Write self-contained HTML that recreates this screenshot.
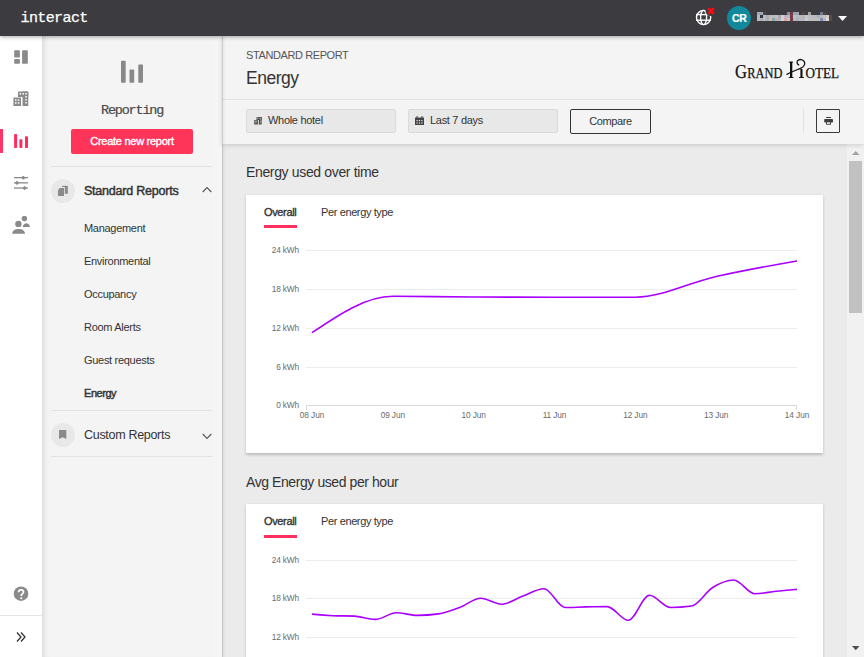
<!DOCTYPE html>
<html><head><meta charset="utf-8">
<style>
*{box-sizing:border-box;margin:0;padding:0}
html,body{width:864px;height:657px;overflow:hidden;background:#ebebeb;font-family:"Liberation Sans",sans-serif;color:#333}
.abs{position:absolute}
#top{position:absolute;left:0;top:0;width:864px;height:36px;background:#3c3b40;z-index:5;box-shadow:0 1px 4px rgba(0,0,0,.35)}
#brand{position:absolute;left:20.5px;top:10px;font-family:"Liberation Mono",monospace;font-size:15px;color:#fff;letter-spacing:-0.6px;-webkit-text-stroke:0.25px #fff}
#rail{position:absolute;left:0;top:36px;width:42px;height:621px;background:#fff;z-index:3}
#side{position:absolute;left:42px;top:36px;width:180px;height:621px;background:linear-gradient(90deg,#f4f4f4 170px,#f7f7f7 180px);box-shadow:inset 6px 0 6px -5px rgba(0,0,0,.15)}
#sedge{position:absolute;left:222px;top:36px;width:4px;height:621px;background:linear-gradient(90deg,rgba(0,0,0,.16) 0,rgba(0,0,0,.16) 1px,rgba(0,0,0,.05) 1px,rgba(0,0,0,0) 4px);z-index:4}
#hdr{position:absolute;left:222px;top:36px;width:642px;height:108px;background:#f4f4f4;box-shadow:0 1px 5px rgba(0,0,0,.16);z-index:2}
.t{position:absolute;white-space:nowrap}
.card{position:absolute;left:246px;width:577px;background:#fff;border-radius:1px;box-shadow:0 1.5px 3px rgba(0,0,0,.2)}
.navi{position:absolute;left:84px;margin-top:1px;font-size:11px;letter-spacing:-0.3px;color:#333;white-space:nowrap}
.ylab{position:absolute;font-size:8px;color:#555;text-align:right;width:40px;white-space:nowrap}
.xlab{position:absolute;font-size:8px;color:#555;text-align:center;width:40px;white-space:nowrap}
</style></head><body>
<div id="top">
  <div id="brand">interact</div>
  <!-- globe -->
  <svg class="abs" style="left:690px;top:4px" width="30" height="26" viewBox="0 0 30 26">
    <defs><mask id="gm"><rect width="30" height="26" fill="#fff"/><circle cx="21" cy="6.5" r="5.5" fill="#000"/></mask></defs>
    <g fill="none" stroke="#fff" stroke-width="1.4" mask="url(#gm)">
      <circle cx="13.6" cy="13.5" r="7.1"/>
      <ellipse cx="13.6" cy="13.5" rx="3" ry="7.1"/>
      <line x1="6" y1="10.6" x2="21" y2="10.6"/>
      <line x1="6" y1="16.2" x2="21" y2="16.2"/>
    </g>
    <path d="M18.3 4.2 L23.9 9.8 M23.9 4.2 L18.3 9.8" stroke="#ff0a14" stroke-width="2.5"/>
  </svg>
  <div class="abs" style="left:727px;top:6px;width:24px;height:24px;border-radius:50%;background:#11899b"></div>
  <div class="t" style="left:732px;top:12px;font-size:10.5px;font-weight:bold;color:#fff;letter-spacing:-0.3px;-webkit-text-stroke:0.2px #fff">CR</div>
  <div class="abs" style="left:0;top:0;filter:blur(0.5px)"><div class="abs" style="left:757px;top:15px;width:3px;height:3px;background:#b5bac0"></div><div class="abs" style="left:757px;top:18px;width:3px;height:3px;background:#b8bcc0"></div><div class="abs" style="left:757px;top:12px;width:3px;height:3px;background:#a3a9b3"></div><div class="abs" style="left:760px;top:15px;width:3px;height:3px;background:#2f3540"></div><div class="abs" style="left:760px;top:18px;width:3px;height:3px;background:#a8b0b8"></div><div class="abs" style="left:760px;top:12px;width:3px;height:3px;background:#a3a9b3"></div><div class="abs" style="left:763px;top:15px;width:3px;height:3px;background:#b8bcc8"></div><div class="abs" style="left:763px;top:18px;width:3px;height:3px;background:#c8b8b8"></div><div class="abs" style="left:763px;top:12px;width:3px;height:3px;background:#4e4544"></div><div class="abs" style="left:766px;top:15px;width:3px;height:3px;background:#a9aeb5"></div><div class="abs" style="left:766px;top:18px;width:3px;height:3px;background:#a8b0b0"></div><div class="abs" style="left:769px;top:15px;width:3px;height:3px;background:#c9b8c0"></div><div class="abs" style="left:769px;top:18px;width:3px;height:3px;background:#d0c0a0"></div><div class="abs" style="left:772px;top:15px;width:3px;height:3px;background:#b5c0b8"></div><div class="abs" style="left:772px;top:18px;width:3px;height:3px;background:#80a8b8"></div><div class="abs" style="left:775px;top:15px;width:3px;height:3px;background:#c8b8d0"></div><div class="abs" style="left:775px;top:18px;width:3px;height:3px;background:#d0a8b0"></div><div class="abs" style="left:778px;top:15px;width:3px;height:3px;background:#a8a8b0"></div><div class="abs" style="left:778px;top:18px;width:3px;height:3px;background:#a8b8c0"></div><div class="abs" style="left:781px;top:15px;width:3px;height:3px;background:#d0d0d0"></div><div class="abs" style="left:781px;top:18px;width:3px;height:3px;background:#d8d0d0"></div><div class="abs" style="left:784px;top:15px;width:3px;height:3px;background:#c8b0c0"></div><div class="abs" style="left:784px;top:18px;width:3px;height:3px;background:#d8a8b0"></div><div class="abs" style="left:787px;top:15px;width:3px;height:3px;background:#b0bcc8"></div><div class="abs" style="left:787px;top:18px;width:3px;height:3px;background:#c0c8d0"></div><div class="abs" style="left:787px;top:12px;width:3px;height:3px;background:#8490a8"></div><div class="abs" style="left:790px;top:15px;width:3px;height:3px;background:#7a3a40"></div><div class="abs" style="left:790px;top:18px;width:3px;height:3px;background:#7a3a40"></div><div class="abs" style="left:790px;top:12px;width:3px;height:3px;background:#7a3a40"></div><div class="abs" style="left:793px;top:15px;width:3px;height:3px;background:#b8c0d0"></div><div class="abs" style="left:793px;top:18px;width:3px;height:3px;background:#c0b0b8"></div><div class="abs" style="left:793px;top:12px;width:3px;height:3px;background:#9aa3b0"></div><div class="abs" style="left:796px;top:15px;width:3px;height:3px;background:#b3b8c2"></div><div class="abs" style="left:796px;top:18px;width:3px;height:3px;background:#a8b4c0"></div><div class="abs" style="left:796px;top:12px;width:3px;height:3px;background:#9aa3b0"></div><div class="abs" style="left:799px;top:15px;width:3px;height:3px;background:#c4b5bb"></div><div class="abs" style="left:799px;top:18px;width:3px;height:3px;background:#c8b0b8"></div><div class="abs" style="left:802px;top:15px;width:3px;height:3px;background:#b0b5bb"></div><div class="abs" style="left:802px;top:18px;width:3px;height:3px;background:#b0bcc0"></div><div class="abs" style="left:802px;top:12px;width:3px;height:3px;background:#4e4544"></div><div class="abs" style="left:805px;top:15px;width:3px;height:3px;background:#c8c3c0"></div><div class="abs" style="left:805px;top:18px;width:3px;height:3px;background:#d0c8c8"></div><div class="abs" style="left:808px;top:15px;width:3px;height:3px;background:#bcc0c6"></div><div class="abs" style="left:808px;top:18px;width:3px;height:3px;background:#b8c0c8"></div><div class="abs" style="left:808px;top:12px;width:3px;height:3px;background:#a5a3a0"></div><div class="abs" style="left:811px;top:15px;width:3px;height:3px;background:#c0b8c8"></div><div class="abs" style="left:811px;top:18px;width:3px;height:3px;background:#c8b8c0"></div><div class="abs" style="left:814px;top:15px;width:3px;height:3px;background:#b0b8c0"></div><div class="abs" style="left:814px;top:18px;width:3px;height:3px;background:#c0c0b0"></div><div class="abs" style="left:817px;top:15px;width:3px;height:3px;background:#a8b0c0"></div><div class="abs" style="left:817px;top:18px;width:3px;height:3px;background:#b8c0c0"></div><div class="abs" style="left:820px;top:15px;width:3px;height:3px;background:#c0b8c0"></div><div class="abs" style="left:820px;top:18px;width:3px;height:3px;background:#8090b0"></div><div class="abs" style="left:820px;top:12px;width:3px;height:3px;background:#6d7690"></div><div class="abs" style="left:823px;top:15px;width:3px;height:3px;background:#c8c0b8"></div><div class="abs" style="left:823px;top:18px;width:3px;height:3px;background:#c0b8c0"></div><div class="abs" style="left:823px;top:12px;width:3px;height:3px;background:#5a4040"></div><div class="abs" style="left:826px;top:15px;width:3px;height:3px;background:#d0d0d0"></div><div class="abs" style="left:826px;top:18px;width:3px;height:3px;background:#d8d8d8"></div><div class="abs" style="left:829px;top:15px;width:3px;height:3px;background:#5b4a44"></div><div class="abs" style="left:829px;top:18px;width:3px;height:3px;background:#5b4a44"></div></div>
  <svg class="abs" style="left:838px;top:16px" width="9" height="6"><path d="M0 0 L9 0 L4.5 5 Z" fill="#fff"/></svg>
</div>

<div id="rail">
  <!-- dashboard -->
  <svg class="abs" style="left:14px;top:14px" width="14" height="14" viewBox="0 0 14 14"><g fill="#8a8a8a"><rect x="0.2" y="0.2" width="5.7" height="7.4" rx="0.8"/><rect x="0.2" y="9.1" width="5.7" height="4.7" rx="0.8"/><rect x="8.1" y="0.2" width="5.7" height="13.6" rx="0.8"/></g></svg>
  <!-- building -->
  <svg class="abs" style="left:13px;top:55px" width="16" height="16" viewBox="0 0 16 16"><g fill="#8a8a8a"><rect x="5" y="0.4" width="10.3" height="5.6" rx="0.6"/><rect x="9.3" y="0.4" width="6" height="14.6" rx="0.6"/><rect x="0.4" y="6.4" width="7.6" height="8.6" rx="0.6"/></g><g fill="#fff"><rect x="6.5" y="2" width="1.5" height="1.5"/><rect x="9.5" y="2" width="1.5" height="1.5"/><rect x="12.3" y="2" width="1.5" height="1.5"/><rect x="12.3" y="5" width="1.5" height="1.5"/><rect x="12.3" y="8" width="1.5" height="1.5"/><rect x="12.3" y="11" width="1.5" height="1.5"/><rect x="2" y="8.3" width="1.5" height="1.5"/><rect x="4.8" y="8.3" width="1.5" height="1.5"/><rect x="2" y="11.2" width="1.5" height="1.5"/><rect x="4.8" y="11.2" width="1.5" height="1.5"/></g><rect x="8" y="6" width="1.3" height="9" fill="#fff"/></svg>
  <!-- active bar -->
  <div class="abs" style="left:0;top:93px;width:3px;height:24px;background:#ff3366"></div>
  <svg class="abs" style="left:14px;top:98px" width="14" height="14" viewBox="0 0 14 14"><g fill="#ff2d5f"><rect x="0.1" y="0" width="3" height="14" rx="0.8"/><rect x="5.4" y="5.3" width="3" height="8.7" rx="0.8"/><rect x="11" y="2.3" width="3" height="11.7" rx="0.8"/></g></svg>
  <!-- sliders -->
  <svg class="abs" style="left:14px;top:140px" width="14" height="14" viewBox="0 0 14 14"><g fill="#8a8a8a"><rect x="0" y="1" width="14" height="1.3"/><rect x="0" y="6.2" width="14" height="1.3"/><rect x="0" y="11.4" width="14" height="1.3"/><path d="M9.3,-0.5 L11.5,1.65 L9.3,3.8 L7.1,1.65Z"/><path d="M3,4.7 L5.2,6.85 L3,9 L0.8,6.85Z"/><path d="M10.6,9.9 L12.8,12.05 L10.6,14.2 L8.4,12.05Z"/></g></svg>
  <!-- people -->
  <svg class="abs" style="left:12px;top:180px" width="18" height="18" viewBox="0 0 18 18"><g fill="#8a8a8a"><circle cx="12.4" cy="2.5" r="2.7"/><path d="M10.6,11.1 C11.2,8.5 12.8,7.3 14.4,7.3 C16,7.3 17.5,8.5 18,11.1 Z"/></g><circle cx="6.4" cy="7.9" r="4.4" fill="#fff"/><path d="M-1,18.8 C-1,13.5 3,11.7 6.6,11.7 C10.2,11.7 14.2,13.5 14.2,18.8Z" fill="#fff"/><g fill="#8a8a8a"><circle cx="6.4" cy="7.9" r="3.2"/><path d="M0.2,17.7 C0.4,14.2 3.5,12.9 6.6,12.9 C9.7,12.9 12.8,14.2 13,17.7 Z"/></g></svg>
  <!-- help -->
  <svg class="abs" style="left:13px;top:549px" width="16" height="16" viewBox="0 0 16 16"><circle cx="8" cy="8.7" r="7.3" fill="#8a8a8a"/><g transform="translate(0,0.8)"><path d="M5.6,6.4 C5.6,4.9 6.7,4 8.1,4 C9.5,4 10.5,4.9 10.5,6.1 C10.5,7.6 8.6,7.9 8.3,9.6 L8.3,10.3" fill="none" stroke="#fff" stroke-width="1.7"/><rect x="7.3" y="11.6" width="1.9" height="1.7" fill="#fff"/></g></svg>
  <div class="abs" style="left:0;top:579px;width:42px;height:1px;background:#e3e3e3"></div>
  <svg class="abs" style="left:16px;top:596px" width="10" height="10" viewBox="0 0 10 10"><path d="M1 0.5 L5 5 L1 9.5 M5 0.5 L9 5 L5 9.5" fill="none" stroke="#333" stroke-width="1.3"/></svg>
</div>

<div id="side">
  <svg class="abs" style="left:79px;top:24px" width="24" height="24" viewBox="0 0 24 24"><g fill="#888"><rect x="0" y="0.8" width="4.7" height="22" rx=".7"/><rect x="8.5" y="9.6" width="4.7" height="13.2" rx=".7"/><rect x="17.3" y="4.4" width="4.7" height="18.4" rx=".7"/></g></svg>
  <div class="t" style="left:59px;top:67px;font-family:'Liberation Mono',monospace;font-size:13.5px;letter-spacing:-1.2px;color:#4a4a4a;-webkit-text-stroke:0.2px #4a4a4a">Reporting</div>
  <div class="abs" style="left:29px;top:93px;width:122px;height:25px;background:#fe3459;border-radius:2px;color:#fff;font-size:11px;letter-spacing:-0.27px;-webkit-text-stroke:0.35px #fff;text-align:center;line-height:25px">Create new report</div>
  <div class="abs" style="left:9px;top:130px;width:161px;height:1px;background:#e2e2e2"></div>
  <div class="abs" style="left:9px;top:143px;width:24px;height:24px;border-radius:50%;background:#e8e8e8"></div>
  <svg class="abs" style="left:16px;top:149px" width="11" height="12" viewBox="0 0 11 12"><rect x="4.1" y="0.8" width="5.7" height="8" fill="#8a8a8a"/><path d="M0,5.2 L2.2,2.9 L6,2.9 L6,10.9 L0,10.9Z" fill="#e9e9e9" stroke="#e9e9e9" stroke-width="1.6"/><path d="M0,5.2 L2.2,2.9 L6,2.9 L6,10.9 L0,10.9Z" fill="#8a8a8a"/><path d="M0.2,4.6 L1.7,3.1 L1.7,4.6Z" fill="#8a8a8a"/></svg>
  <div class="t" style="left:42px;top:148px;font-size:12.5px;letter-spacing:-0.22px;-webkit-text-stroke:0.45px #333;color:#333">Standard Reports</div>
  <svg class="abs" style="left:160px;top:150px" width="10" height="7" viewBox="0 0 10 7"><path d="M0.7 6 L5 1.5 L9.3 6" fill="none" stroke="#555" stroke-width="1.1"/></svg>
</div>
<div class="navi" style="top:221px">Management</div>
<div class="navi" style="top:254px">Environmental</div>
<div class="navi" style="top:287px">Occupancy</div>
<div class="navi" style="top:320px">Room Alerts</div>
<div class="navi" style="top:353px">Guest requests</div>
<div class="navi" style="top:386px;letter-spacing:-0.45px;-webkit-text-stroke:0.45px #333">Energy</div>
<div class="abs" style="left:51px;top:410px;width:161px;height:1px;background:#e2e2e2"></div>
<div class="abs" style="left:51px;top:423px;width:24px;height:24px;border-radius:50%;background:#e8e8e8"></div>
<svg class="abs" style="left:59.3px;top:430.1px" width="8" height="9" viewBox="0 0 8 9"><path d="M0 0 H7.3 V8.9 L3.65 7.3 L0 8.9Z" fill="#8a8a8a"/></svg>
<div class="t" style="left:84px;top:428px;font-size:12.5px;letter-spacing:-0.3px;color:#333">Custom Reports</div>
<svg class="abs" style="left:202px;top:433px" width="10" height="7" viewBox="0 0 10 7"><path d="M0.7 1 L5 5.5 L9.3 1" fill="none" stroke="#555" stroke-width="1.1"/></svg>
<div class="abs" style="left:51px;top:456px;width:161px;height:1px;background:#e2e2e2"></div>

<div id="sedge"></div>
<div id="hdr">
  <div class="t" style="left:24px;top:13.3px;font-size:11px;letter-spacing:-0.4px;color:#555">STANDARD REPORT</div>
  <div class="t" style="left:24px;top:32px;font-size:17.5px;letter-spacing:-0.5px;color:#333">Energy</div>
  <svg class="abs" style="left:508px;top:19px" width="115" height="30" viewBox="0 0 115 30">
    <g font-family="Liberation Serif" fill="#111" stroke="#111" stroke-width="0.25">
      <text x="5" y="22.9" font-size="19" textLength="12" lengthAdjust="spacingAndGlyphs">G</text>
      <text x="17.3" y="22.9" font-size="13.8" textLength="35" lengthAdjust="spacingAndGlyphs">RAND</text>
      <text x="75.5" y="22.9" font-size="13.8" textLength="33.5" lengthAdjust="spacingAndGlyphs">OTEL</text>
    </g>
    <g fill="#111">
      <rect x="60" y="6.7" width="2.3" height="16.2"/>
      <rect x="58.7" y="6.7" width="4.4" height="0.9"/>
      <rect x="58.7" y="22" width="4.8" height="0.9"/>
      <rect x="70.4" y="14" width="2.1" height="8.9"/>
      <rect x="69" y="22" width="5" height="0.9"/>
    </g>
    <path d="M56.5,19.6 C61,17 67,14.8 70.5,13.3 C73.5,12 75.2,9.5 74.5,7 C73.5,4 69,3.8 67.5,5.8 C66.5,7.2 67.3,9.6 69.2,10.2" fill="none" stroke="#111" stroke-width="1.3"/>
  </svg>
  <div class="abs" style="left:0;top:63px;width:642px;height:1px;background:#e4e4e4"></div>
  <div class="abs" style="left:24px;top:73px;width:150px;height:24px;background:#e8e8e8;border:1px solid #dadada;border-radius:2px"></div>
  <svg class="abs" style="left:31.5px;top:80.7px" width="8" height="8" viewBox="0 0 16 16"><g fill="#4a4a4a"><rect x="5" y="0.4" width="10.3" height="5.6"/><rect x="9.3" y="0.4" width="6" height="14.6"/><rect x="0.4" y="6.4" width="7.6" height="8.6"/></g><g fill="#e8e8e8"><rect x="6.5" y="2" width="1.5" height="1.5"/><rect x="9.5" y="2" width="1.5" height="1.5"/><rect x="12.3" y="2" width="1.5" height="1.5"/><rect x="12.3" y="5" width="1.5" height="1.5"/><rect x="12.3" y="8" width="1.5" height="1.5"/><rect x="12.3" y="11" width="1.5" height="1.5"/><rect x="2" y="8.3" width="1.5" height="1.5"/><rect x="4.8" y="8.3" width="1.5" height="1.5"/><rect x="2" y="11.2" width="1.5" height="1.5"/><rect x="4.8" y="11.2" width="1.5" height="1.5"/></g><rect x="8" y="6" width="1.3" height="9" fill="#e8e8e8"/></svg>
  <div class="t" style="left:46px;top:78px;font-size:11px;letter-spacing:-0.3px;color:#333">Whole hotel</div>
  <div class="abs" style="left:186px;top:73px;width:150px;height:24px;background:#e8e8e8;border:1px solid #dadada;border-radius:2px"></div>
  <svg class="abs" style="left:193px;top:80px" width="9" height="9" viewBox="0 0 9 9"><path d="M0 1.5 H9 V9 H0Z" fill="#444"/><path d="M2 0 V2 M7 0 V2" stroke="#444"/><g fill="#e8e8e8"><rect x="1.5" y="4" width="1.2" height="1.2"/><rect x="3.9" y="4" width="1.2" height="1.2"/><rect x="6.3" y="4" width="1.2" height="1.2"/><rect x="1.5" y="6.4" width="1.2" height="1.2"/><rect x="3.9" y="6.4" width="1.2" height="1.2"/><rect x="6.3" y="6.4" width="1.2" height="1.2"/></g></svg>
  <div class="t" style="left:208px;top:78px;font-size:11px;letter-spacing:-0.3px;color:#333">Last 7 days</div>
  <div class="abs" style="left:348px;top:73px;width:81px;height:25px;border:1.3px solid #333;border-radius:2px;font-size:11px;letter-spacing:-0.4px;color:#333;text-align:center;line-height:23px">Compare</div>
  <div class="abs" style="left:581px;top:72px;width:1px;height:25px;background:#e2e2e2"></div>
  <div class="abs" style="left:594px;top:73px;width:24px;height:24px;border:1.3px solid #3a3a3d;border-radius:1px"></div>
  <svg class="abs" style="left:601px;top:80px" width="12" height="10" viewBox="0 0 12 10"><g fill="#3d3d40"><rect x="3.1" y="1" width="4.9" height="1"/><rect x="1.2" y="2.9" width="8.8" height="3.7" rx="0.8"/><rect x="3.1" y="5.5" width="4.9" height="3.2"/></g><rect x="4" y="6.3" width="3.1" height="1.5" fill="#f4f4f4"/></svg>
</div>

<div class="t" style="left:246px;top:164.4px;font-size:14px;letter-spacing:-0.35px;color:#333">Energy used over time</div>
<div class="card" style="top:195px;height:258px"></div>
<div class="t" style="left:246px;top:473.6px;font-size:14px;letter-spacing:-0.42px;color:#333">Avg Energy used per hour</div>
<div class="card" style="top:504px;height:200px"></div>

<!-- scrollbar -->
<div class="abs" style="left:847px;top:144px;width:17px;height:513px;background:#f1f1f1"></div>
<div class="abs" style="left:849px;top:161px;width:13px;height:152px;background:#c1c1c1"></div>
<svg class="abs" style="left:852px;top:150.8px" width="8" height="5"><path d="M0 4.1 L3.75 0 L7.5 4.1Z" fill="#a3a3a3"/></svg>
<svg class="abs" style="left:852px;top:646px" width="8" height="5"><path d="M0 0 L3.75 4.2 L7.5 0Z" fill="#505050"/></svg>

<svg class="abs" style="left:0;top:0" width="864" height="657" viewBox="0 0 864 657">
  <g id="chart1">
    <text x="264" y="215.5" font-size="11" letter-spacing="-0.35" stroke="#333" stroke-width="0.35" fill="#333" font-family="Liberation Sans">Overall</text>
    <rect x="264" y="225" width="33" height="3" fill="#ff2f5e"/>
    <text x="321" y="215.5" font-size="11" letter-spacing="-0.38" fill="#333" font-family="Liberation Sans">Per energy type</text>
    <g stroke="#ececec" stroke-width="1">
      <line x1="306" y1="250.5" x2="797" y2="250.5"/>
      <line x1="306" y1="289.5" x2="797" y2="289.5"/>
      <line x1="306" y1="328.5" x2="797" y2="328.5"/>
      <line x1="306" y1="367.5" x2="797" y2="367.5"/>
    </g>
    <path d="M306.5,410 V405.5 H796.5 V410" fill="none" stroke="#d9d9d9"/>
    <g font-size="8.3" fill="#6a6a6a" letter-spacing="-0.15" font-family="Liberation Sans" text-anchor="end">
      <text x="299" y="252.5">24 kWh</text>
      <text x="299" y="291.5">18 kWh</text>
      <text x="299" y="330.5">12 kWh</text>
      <text x="299" y="369.5">6 kWh</text>
      <text x="299" y="408">0 kWh</text>
    </g>
    <g font-size="8.3" fill="#6a6a6a" letter-spacing="-0.1" font-family="Liberation Sans" text-anchor="middle">
      <text x="312" y="418">08 Jun</text>
      <text x="392.8" y="418">09 Jun</text>
      <text x="473.7" y="418">10 Jun</text>
      <text x="554.5" y="418">11 Jun</text>
      <text x="635.3" y="418">12 Jun</text>
      <text x="716.2" y="418">13 Jun</text>
      <text x="797" y="418">14 Jun</text>
    </g>
    <path d="M312.0,332.7 C338.9,314.5 365.9,296.3 392.8,296.3 C419.8,296.3 446.7,296.9 473.7,297.0 C500.6,297.1 527.6,297.2 554.5,297.2 C581.4,297.2 608.4,297.2 635.3,297.2 C662.3,297.2 689.2,282.5 716.2,276.5 C743.1,270.5 770.1,265.7 797.0,261.0" fill="none" stroke="#aa00ff" stroke-width="1.6"/>
  </g>
  <g id="chart2">
    <text x="264" y="524.6" font-size="11" letter-spacing="-0.35" stroke="#333" stroke-width="0.35" fill="#333" font-family="Liberation Sans">Overall</text>
    <rect x="264" y="535" width="33" height="3" fill="#ff2f5e"/>
    <text x="321" y="524.6" font-size="11" letter-spacing="-0.38" fill="#333" font-family="Liberation Sans">Per energy type</text>
    <g stroke="#ececec" stroke-width="1">
      <line x1="306" y1="560.5" x2="797" y2="560.5"/>
      <line x1="306" y1="598.5" x2="797" y2="598.5"/>
      <line x1="306" y1="637.5" x2="797" y2="637.5"/>
    </g>
    <g font-size="8.3" fill="#6a6a6a" letter-spacing="-0.15" font-family="Liberation Sans" text-anchor="end">
      <text x="299" y="562.5">24 kWh</text>
      <text x="299" y="600.5">18 kWh</text>
      <text x="299" y="639.5">12 kWh</text>
    </g>
    <path d="M312.0,614.1 C319.0,614.8 326.1,615.4 333.1,615.7 C340.1,616.0 347.1,615.8 354.2,616.1 C361.2,616.4 368.2,619.4 375.3,619.4 C382.3,619.4 389.3,612.8 396.3,612.8 C403.4,612.8 410.4,615.4 417.4,615.4 C424.5,615.4 431.5,614.9 438.5,613.9 C445.6,612.9 452.6,610.1 459.6,607.5 C466.6,604.9 473.7,598.2 480.7,598.2 C487.7,598.2 494.8,604.2 501.8,604.2 C508.8,604.2 515.8,598.7 522.9,596.1 C529.9,593.5 536.9,588.7 544.0,588.7 C551.0,588.7 558.0,607.5 565.0,607.5 C572.1,607.5 579.1,607.0 586.1,606.9 C593.2,606.8 600.2,606.6 607.2,606.6 C614.2,606.6 621.3,620.3 628.3,620.3 C635.3,620.3 642.4,595.3 649.4,595.3 C656.4,595.3 663.4,607.5 670.5,607.5 C677.5,607.5 684.5,607.0 691.6,606.0 C698.6,605.0 705.6,591.8 712.7,587.5 C719.7,583.2 726.7,580.0 733.7,580.0 C740.8,580.0 747.8,593.8 754.8,593.8 C761.9,593.8 768.9,592.0 775.9,591.3 C782.9,590.6 790.0,590.0 797.0,589.4" fill="none" stroke="#aa00ff" stroke-width="1.6"/>
  </g>
</svg>
</body></html>
